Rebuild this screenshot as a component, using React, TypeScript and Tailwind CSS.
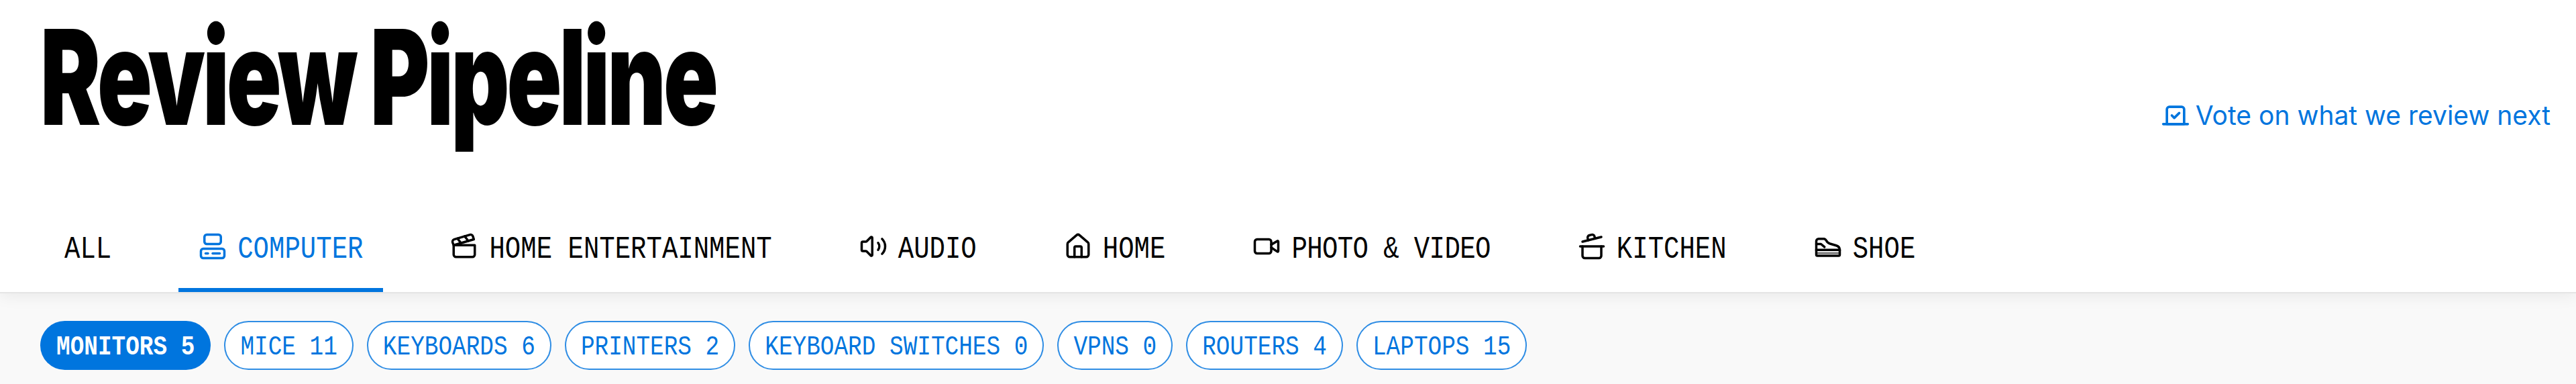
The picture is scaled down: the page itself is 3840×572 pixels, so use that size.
import { Clapperboard, Computer, CookingPot, House, Video, Vote, Volume2 } from "lucide-react";

const mono = "font-['Liberation_Mono',monospace]";

function Shoe({ className }: { className?: string }) {
  return (
    <svg viewBox="0 0 24 24" fill="none" stroke="currentColor" strokeWidth="2" strokeLinecap="round" strokeLinejoin="round" className={className}>
      <path d="M2 7.500a2 2 0 0 1 2-2h4.500c1 0 1.500.6 2 1.500.6 1.200 1.700 2.200 3.200 2.700l5.300 1.600c1.500.5 3 1.700 3 3.700V19a1 1 0 0 1-1 1H3a1 1 0 0 1-1-1z" />
      <path d="M2 15h20" />
      <path d="M2 10h4l3 2.500" />
      <path d="M3 17.700h18" strokeWidth="1.500" opacity="0.6" />
    </svg>
  );
}

const tabs = [
  { label: "ALL" },
  { label: "COMPUTER", Icon: Computer, active: true },
  { label: "HOME ENTERTAINMENT", Icon: Clapperboard },
  { label: "AUDIO", Icon: Volume2 },
  { label: "HOME", Icon: House },
  { label: "PHOTO & VIDEO", Icon: Video, tight: true },
  { label: "KITCHEN", Icon: CookingPot },
  { label: "SHOE", Icon: Shoe },
];

const pills = ["MICE 11", "KEYBOARDS 6", "PRINTERS 2", "KEYBOARD SWITCHES 0", "VPNS 0", "ROUTERS 4", "LAPTOPS 15"];

export default function App() {
  return (
    <div className="h-[572px] w-[3840px] overflow-hidden bg-[#f9f9f9]">
      <header className="relative z-10 border-b-2 border-[#e5e5e5] bg-white shadow-[0_2px_24px_rgba(0,0,0,0.08)]">
        <div className="flex h-[298px] items-start justify-between pr-[38px] pl-[60px]">
          <h1 className="mt-[15px] origin-left scale-x-[0.686] font-['Inter',sans-serif] text-[197px] leading-[200px] font-black tracking-[-0.03em] whitespace-nowrap text-black">
            Review Pipeline
          </h1>
          <a className="mt-[148px] flex items-center gap-[8px] font-['Inter',sans-serif] text-[39px] leading-[48px] whitespace-nowrap text-[#0075de]">
            <Vote className="size-[44px]" strokeWidth={2} />
            Vote on what we review next
          </a>
        </div>
        <nav className={`flex h-[137px] gap-[70px] pl-[66px] ${mono} text-[39px] text-black`}>
          {tabs.map(({ label, Icon, active, tight }) => (
            <div
              key={label}
              className={`flex items-center gap-[16px] border-b-[6px] px-[30px] pt-[18px] whitespace-pre ${
                active ? "border-[#0075de] text-[#0075de]" : "border-transparent"
              }`}
            >
              {Icon && <Icon className="-mt-[11px] size-[42px]" strokeWidth={2} />}
              <span className={`inline-block scale-y-[1.17] ${tight ? "tracking-[-0.6px]" : ""}`}>{label}</span>
            </div>
          ))}
        </nav>
      </header>
      <div className={`flex gap-[20px] px-[60px] pt-[41px] ${mono} text-[34.4px]`}>
        <span className="flex h-[73px] items-center rounded-full bg-[#0075de] px-[24px] pt-[4px] font-bold whitespace-pre text-white">
          <span className="inline-block scale-y-[1.17]">MONITORS 5</span>
        </span>
        {pills.map((p) => (
          <span key={p} className="flex h-[73px] items-center rounded-full border-2 border-[#2f8de4] bg-white px-[22px] pt-[4px] whitespace-pre text-[#0075de]">
            <span className="inline-block scale-y-[1.17]">{p}</span>
          </span>
        ))}
      </div>
    </div>
  );
}
